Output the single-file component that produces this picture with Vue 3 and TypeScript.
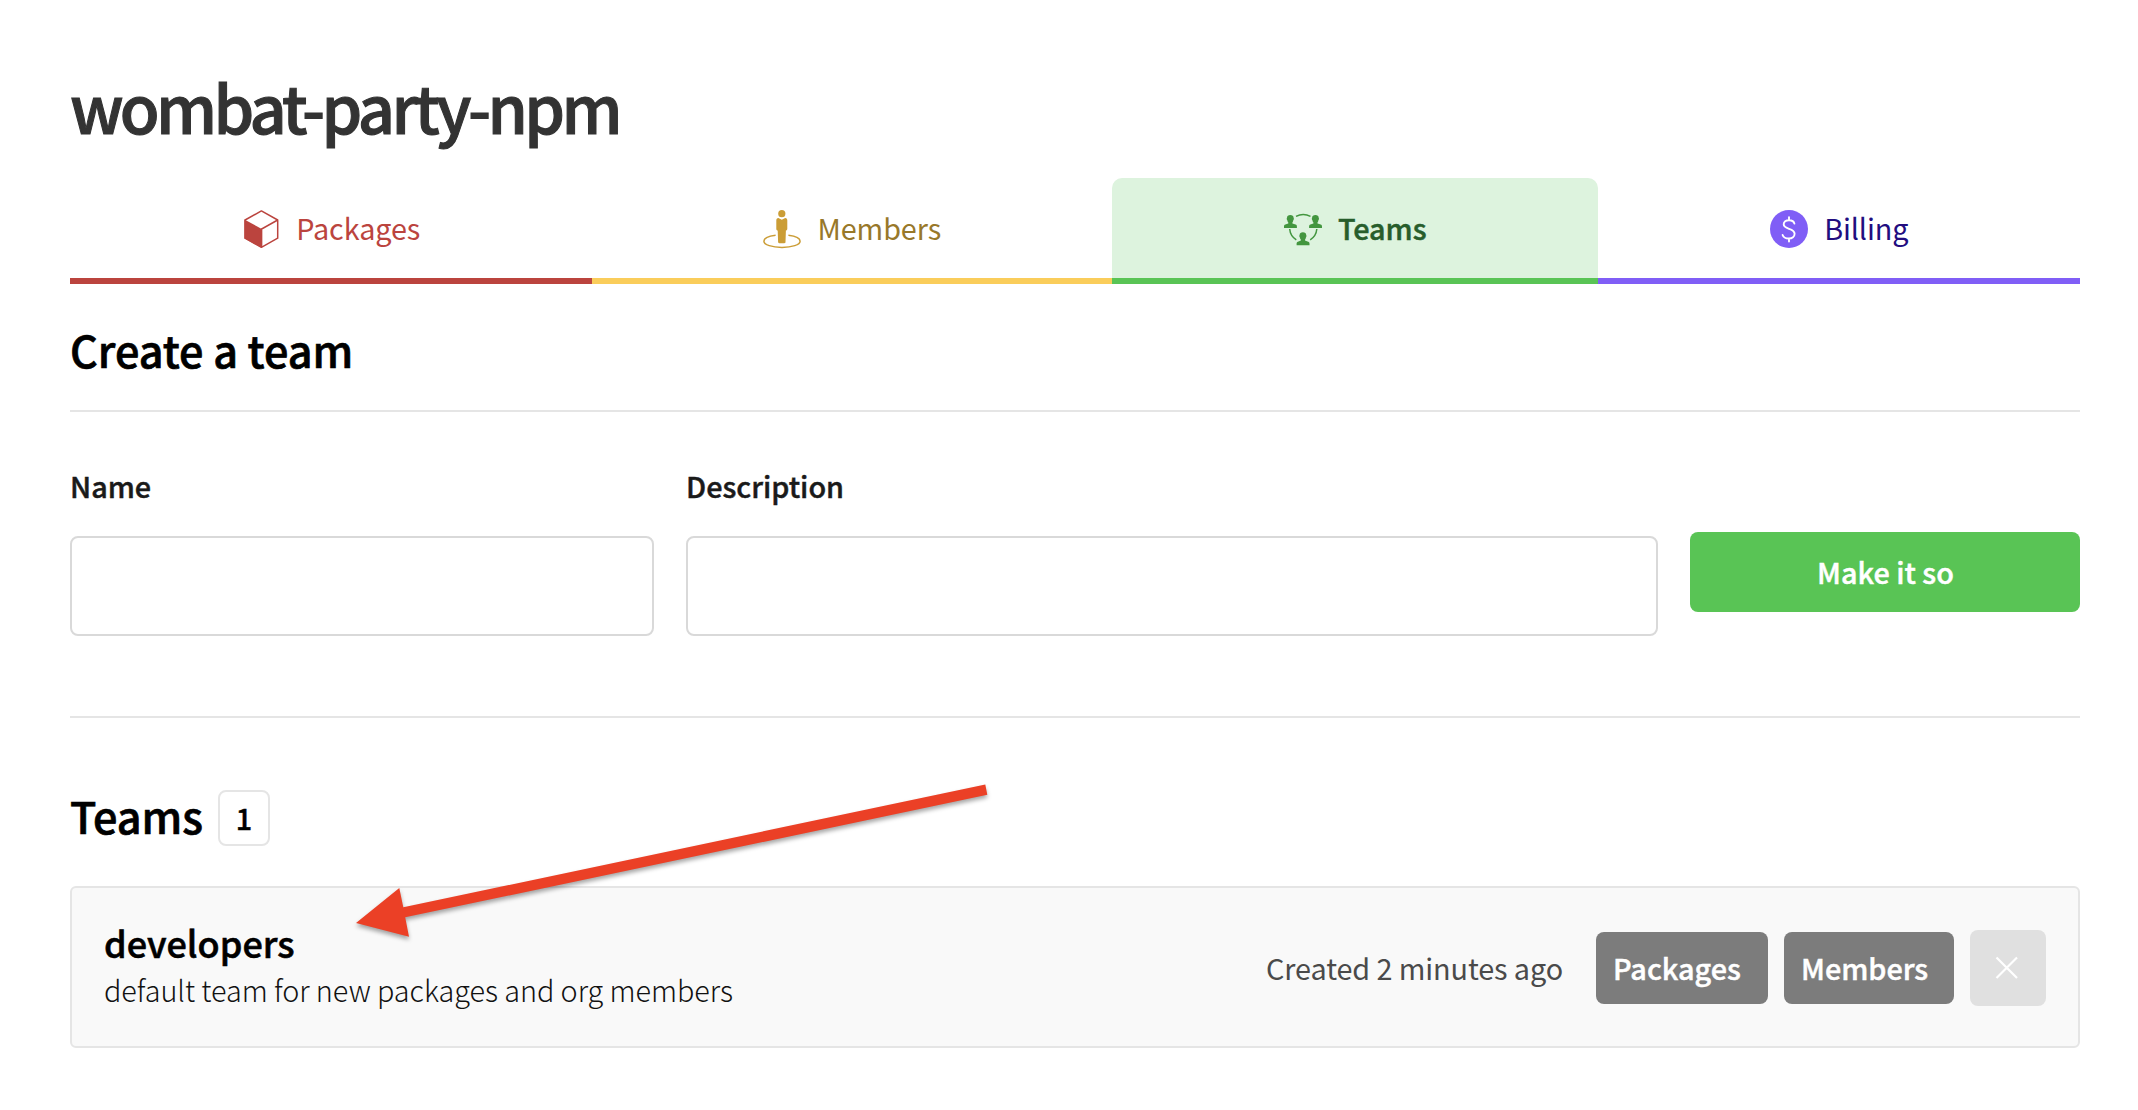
<script setup lang="ts">
import { ref } from 'vue'

interface Team {
  name: string
  description: string
  created: string
}

const name = ref('')
const description = ref('')
const teams = ref<Team[]>([
  {
    name: 'developers',
    description: 'default team for new packages and org members',
    created: 'Created 2 minutes ago',
  },
])
</script>

<template>
  <main class="page">
    <h1 class="org">wombat-party-npm</h1>

    <nav class="tabs">
      <a class="tab packages">
        <svg class="icon" viewBox="0 0 38 38">
          <path d="M19.400 .9 35.700 10v18.200L19.400 37.300 3.100 28.200V10z" fill="none" stroke="#bb443e" stroke-width="1.500" stroke-linejoin="round" />
          <path d="M35.700 10 19.600 19v18" fill="none" stroke="#bb443e" stroke-width="1.500" />
          <path d="M2.400 9.600 19.800 19v18.800L2.400 28.600z" fill="#bb443e" />
        </svg>
        <span>Packages</span>
      </a>
      <a class="tab members">
        <svg class="icon" viewBox="0 0 38 38">
          <path d="M12.600 25.200C5.600 26 .9 28.400.9 31.200c0 3.600 8.100 6.200 18.100 6.200s18.100-2.600 18.100-6.200c0-2.800-4.800-5.200-11.700-6" fill="none" stroke="#cb9d36" stroke-width="1.500" />
          <circle cx="18.800" cy="3.700" r="3.600" fill="#cb9d36" />
          <path d="M15.400 7.900 18.800 9.800l3.400-1.900c1.500.2 2.100 1 2.100 2.500V19c0 .9-.8 1.500-1.400 1.600L22.500 32c0 .8-.5 1.200-1.200 1.200h-5c-.7 0-1.200-.4-1.200-1.200l-.4-11.400c-.8-.2-1.400-.7-1.400-1.600v-8.600c0-1.500.7-2.300 2.100-2.500z" fill="#cb9d36" />
        </svg>
        <span>Members</span>
      </a>
      <a class="tab teams">
        <svg class="icon" viewBox="0 0 38 38">
          <g fill="none" stroke="#43963f" stroke-width="1.500">
            <path d="M12 6.300a16 16 0 0 1 14.500 0" />
            <path d="M5.700 19a14 14 0 0 0 6.600 10.800" />
            <path d="M32.800 19a14 14 0 0 1-6.600 10.800" />
          </g>
          <g fill="#43963f">
            <path id="person" d="M3 7.700C3 5.900 4.300 5 6.300 5s3.300.9 3.300 2.700c.5.6.3 2-.3 2.500-.1 1-.4 1.800-.9 2.300v.9l3.200 1.100c1 .4 1.300 1.100 1.300 2v1.600H0v-1.600c0-.9.400-1.600 1.300-2l3-1.100v-.9c-.6-.5-.9-1.300-1-2.300-.6-.5-.8-1.900-.3-2.500z" />
            <use href="#person" x="25.100" />
            <use href="#person" x="12.600" y="17.200" />
          </g>
        </svg>
        <span>Teams</span>
      </a>
      <a class="tab billing">
        <svg class="icon" viewBox="0 0 38 38">
          <circle cx="19" cy="19" r="19" fill="#805ef6" />
          <path d="M24.400 13.600c-.5-2.200-2.600-3.400-5.400-3.400-3.100 0-5.300 1.600-5.300 4.100 0 5.800 10.900 3.200 10.900 9.500 0 2.800-2.400 4.700-5.700 4.700-3 0-5.600-1.300-6.300-3.500M19 7.100v3.100M19 28.500v3.100" fill="none" stroke="#fff" stroke-width="1.900" stroke-linecap="round" />
        </svg>
        <span>Billing</span>
      </a>
    </nav>

    <h2 class="heading create">Create a team</h2>

    <form class="form" @submit.prevent>
      <label class="field name">
        <span>Name</span>
        <input v-model="name" type="text" />
      </label>
      <label class="field desc">
        <span>Description</span>
        <input v-model="description" type="text" />
      </label>
      <button class="submit" type="submit">Make it so</button>
    </form>

    <div class="listhead">
      <h2 class="heading">Teams</h2>
      <span class="count">{{ teams.length }}</span>
    </div>

    <section v-for="team in teams" :key="team.name" class="card">
      <div class="info">
        <h3>{{ team.name }}</h3>
        <p>{{ team.description }}</p>
      </div>
      <span class="created">{{ team.created }}</span>
      <a class="action pk">Packages</a>
      <a class="action mb">Members</a>
      <button class="remove" type="button" aria-label="Remove team">
        <svg width="24" height="24" viewBox="0 0 24 24">
          <path d="M1.500 1.500l20.500 20.500M22 1.500l-20.500 20.500" stroke="#fff" stroke-width="2.200" fill="none" />
        </svg>
      </button>
    </section>

    <svg class="arrow" width="660" height="180" viewBox="0 0 660 180">
      <path d="M16 153 59.300 118l4 19.300L645.300 14.500l2 10.300L65.200 147.300l3.800 19.500z" fill="#eb4026" />
    </svg>
  </main>
</template>

<style>
body {
  background: #fff;
}
</style>

<style scoped>
.page {
  position: relative;
  box-sizing: border-box;
  width: 2138px;
  height: 1110px;
  padding: 56px 58px 0 70px;
  overflow: hidden;
  background: #fff;
  color: #000;
  font-family: 'Noto Sans CJK SC', 'Open Sans', sans-serif;
  font-size: 28.8px;
}
h1,
h2,
h3,
p {
  margin: 0;
}
.org,
.heading,
.teams span,
.field span,
.submit,
.count,
.info h3,
.action {
  font-weight: 500;
  -webkit-text-stroke: 0.016em currentColor;
}
.org {
  font-size: 64.8px;
  line-height: 100px;
  letter-spacing: -3.62px;
  color: #333;
}
.tabs {
  display: flex;
  margin-top: 22px;
}
.tab {
  box-sizing: border-box;
  display: flex;
  align-items: center;
  justify-content: center;
  gap: 16.5px;
  height: 106px;
  border-bottom: 6px solid;
  line-height: 40px;
  letter-spacing: -0.1px;
}
.icon {
  display: block;
  flex: none;
  width: 38px;
  height: 38px;
  margin-top: 2px;
  overflow: visible;
}
.packages {
  width: 522px;
  color: #bb443e;
  border-color: #bb443e;
}
.members {
  width: 520px;
  color: #98782a;
  border-color: #facd5b;
}
.teams {
  width: 486px;
  color: #275d2b;
  background: #ddf3de;
  border-color: #59c455;
  border-radius: 10px 10px 0 0;
}
.billing {
  width: 482px;
  color: #220d80;
  border-color: #805ef6;
}
.heading {
  font-size: 43.2px;
  line-height: 60px;
  letter-spacing: -0.05px;
}
.create {
  margin-top: 35px;
  padding-bottom: 31px;
  border-bottom: 2px solid #e5e5e5;
}
.form {
  display: flex;
  align-items: flex-start;
  gap: 32px;
  padding: 54px 0 80px;
  border-bottom: 2px solid #e5e5e5;
}
.field {
  display: flex;
  flex-direction: column;
  gap: 30px;
  line-height: 40px;
  color: #1a1a1a;
}
.name {
  width: 584px;
}
.desc {
  width: 972px;
}
.field input {
  box-sizing: border-box;
  width: 100%;
  height: 100px;
  padding: 0 24px;
  border: 2px solid #d9d9d9;
  border-radius: 8px;
  background: #fff;
  font: inherit;
  outline: none;
}
.submit {
  flex: 1;
  height: 80px;
  margin-top: 66px;
  padding: 0 0 0 1px;
  border: 0;
  border-radius: 8px;
  background: #59c455;
  color: #fff;
  font-family: inherit;
  font-size: inherit;
  line-height: 80px;
}
.listhead {
  display: flex;
  align-items: flex-start;
  gap: 15px;
  padding-top: 67px;
  height: 101px;
}
.count {
  box-sizing: border-box;
  width: 52px;
  height: 56px;
  margin-top: 5px;
  border: 2px solid #e5e5e5;
  border-radius: 8px;
  line-height: 51px;
  text-align: center;
}
.card {
  box-sizing: border-box;
  display: flex;
  align-items: center;
  height: 162px;
  padding: 0 32px;
  border: 2px solid #e5e5e5;
  border-radius: 6px;
  background: #f9f9f9;
}
.info {
  flex: 1;
  margin-top: -1px;
}
.info h3 {
  font-size: 36px;
  line-height: 46px;
}
.info p {
  line-height: 49px;
  font-weight: 300;
  letter-spacing: -0.05px;
  color: #111;
}
.created {
  margin: 2px 33px 0 0;
  line-height: 40px;
  color: #4a4a4a;
  letter-spacing: -0.1px;
}
.action {
  box-sizing: border-box;
  height: 72px;
  margin: 2px 16px 0 0;
  padding-left: 17px;
  border-radius: 8px;
  background: #7c7c7c;
  color: #fff;
  line-height: 72px;
}
.pk {
  width: 172px;
}
.mb {
  width: 170px;
}
.remove {
  display: flex;
  align-items: center;
  justify-content: center;
  width: 76px;
  height: 76px;
  margin: 2px 0 0;
  padding: 0 2px 0 0;
  border: 0;
  border-radius: 8px;
  background: #e0e0e0;
}
.arrow {
  position: absolute;
  left: 340px;
  top: 770px;
  overflow: visible;
  filter: drop-shadow(0 3px 2px rgba(0, 0, 0, 0.35));
  pointer-events: none;
}
</style>
